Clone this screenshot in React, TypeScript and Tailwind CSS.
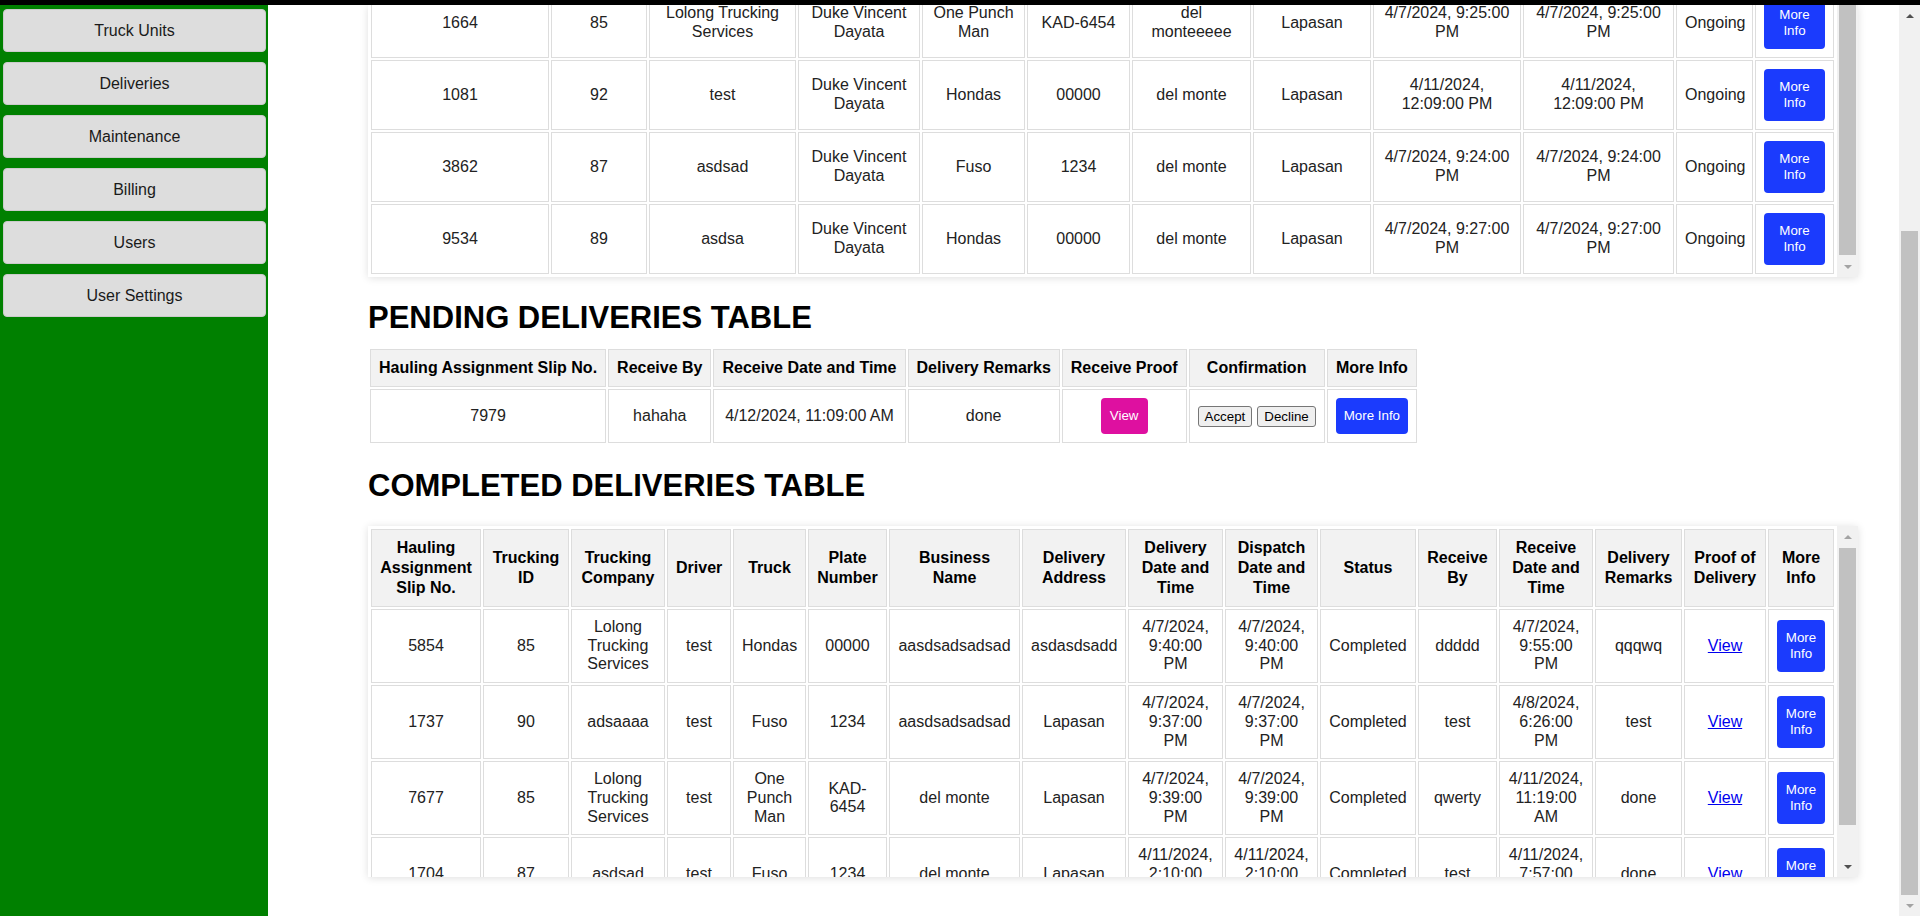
import React from 'react';

const menu = ['Truck Units', 'Deliveries', 'Maintenance', 'Billing', 'Users', 'User Settings'];

const ongoing = [
  ['1664', '85', 'Lolong Trucking Services', 'Duke Vincent Dayata', 'One Punch Man', 'KAD-6454', 'del monteeeee', 'Lapasan', '4/7/2024, 9:25:00 PM', '4/7/2024, 9:25:00 PM', 'Ongoing'],
  ['1081', '92', 'test', 'Duke Vincent Dayata', 'Hondas', '00000', 'del monte', 'Lapasan', '4/11/2024, 12:09:00 PM', '4/11/2024, 12:09:00 PM', 'Ongoing'],
  ['3862', '87', 'asdsad', 'Duke Vincent Dayata', 'Fuso', '1234', 'del monte', 'Lapasan', '4/7/2024, 9:24:00 PM', '4/7/2024, 9:24:00 PM', 'Ongoing'],
  ['9534', '89', 'asdsa', 'Duke Vincent Dayata', 'Hondas', '00000', 'del monte', 'Lapasan', '4/7/2024, 9:27:00 PM', '4/7/2024, 9:27:00 PM', 'Ongoing'],
];

const completedHead = [
  'Hauling Assignment Slip No.', 'Trucking ID', 'Trucking Company', 'Driver', 'Truck', 'Plate Number',
  'Business Name', 'Delivery Address', 'Delivery Date and Time', 'Dispatch Date and Time', 'Status',
  'Receive By', 'Receive Date and Time', 'Delivery Remarks', 'Proof of Delivery', 'More Info',
];

const completed = [
  ['5854', '85', 'Lolong Trucking Services', 'test', 'Hondas', '00000', 'aasdsadsadsad', 'asdasdsadd', '4/7/2024, 9:40:00 PM', '4/7/2024, 9:40:00 PM', 'Completed', 'ddddd', '4/7/2024, 9:55:00 PM', 'qqqwq'],
  ['1737', '90', 'adsaaaa', 'test', 'Fuso', '1234', 'aasdsadsadsad', 'Lapasan', '4/7/2024, 9:37:00 PM', '4/7/2024, 9:37:00 PM', 'Completed', 'test', '4/8/2024, 6:26:00 PM', 'test'],
  ['7677', '85', 'Lolong Trucking Services', 'test', 'One Punch Man', 'KAD-6454', 'del monte', 'Lapasan', '4/7/2024, 9:39:00 PM', '4/7/2024, 9:39:00 PM', 'Completed', 'qwerty', '4/11/2024, 11:19:00 AM', 'done'],
  ['1704', '87', 'asdsad', 'test', 'Fuso', '1234', 'del monte', 'Lapasan', '4/11/2024, 2:10:00 PM', '4/11/2024, 2:10:00 PM', 'Completed', 'test', '4/11/2024, 7:57:00 PM', 'done'],
];

const td = 'border border-[#dddddd] p-2 text-center align-middle text-[#222]';
const th = 'border border-[#dddddd] bg-[#f2f2f2] p-2 text-center align-middle font-bold leading-[20px] text-black';

const MoreInfo = ({ wide }: { wide?: boolean }) => (
  <button className={`mx-auto block w-fit rounded-[4px] bg-[#1b3bfd] px-2 py-[10px] text-[13.33px] leading-[16px] text-white ${wide ? 'whitespace-nowrap' : ''}`}>
    More Info
  </button>
);

const Arrow = ({ up, dark }: { up?: boolean; dark?: boolean }) => (
  <div className="flex h-[21px] shrink-0 items-center justify-center">
    {up ? (
      <div className={`h-0 w-0 border-x-[4px] border-b-[4px] border-x-transparent ${dark ? 'border-b-[#505050]' : 'border-b-[#a3a3a3]'}`} />
    ) : (
      <div className={`h-0 w-0 border-x-[4px] border-t-[4px] border-x-transparent ${dark ? 'border-t-[#505050]' : 'border-t-[#a3a3a3]'}`} />
    )}
  </div>
);

export default function App() {
  return (
    <div className="flex h-screen w-full flex-col overflow-hidden bg-white font-['Liberation_Sans',Arial,sans-serif] text-[16px]">
      <div className="h-[5px] shrink-0 bg-black" />
      <div className="flex min-h-0 flex-1">
        {/* sidebar */}
        <aside className="flex w-[268px] shrink-0 flex-col gap-[10px] bg-[#008000] pl-[3px] pr-[2px] pt-[4px]">
          {menu.map(m => (
            <button key={m} className="flex h-[43px] items-center justify-center rounded-[4px] border border-[#cbcbcb] bg-[#dddddd] text-[16px] leading-[18px] text-[#1a1a1a]">
              {m}
            </button>
          ))}
        </aside>

        <main className="min-w-0 flex-1 overflow-hidden pl-[100px]">
          {/* ongoing deliveries, scrolled to bottom */}
          <div className="flex h-[272px] w-[1490px] shadow-[0_1px_8px_rgba(0,0,0,0.13)]">
            <div className="flex flex-col justify-end overflow-hidden p-px">
              <table className="w-[1467px] table-fixed border-separate border-spacing-[2px] leading-[18.7px]">
                <colgroup>
                  <col className="w-[178px]" />
                  <col className="w-[96px]" />
                  <col className="w-[147px]" />
                  <col className="w-[122px]" />
                  <col className="w-[103px]" />
                  <col className="w-[103px]" />
                  <col className="w-[119px]" />
                  <col className="w-[118px]" />
                  <col className="w-[148px]" />
                  <col className="w-[151px]" />
                  <col className="w-[77px]" />
                  <col className="w-[79px]" />
                </colgroup>
                <tbody>
                  {ongoing.map(r => (
                    <tr key={r[0]}>
                      {r.map((c, i) => (
                        <td key={i} className={td}>{c}</td>
                      ))}
                      <td className={td}><MoreInfo /></td>
                    </tr>
                  ))}
                </tbody>
              </table>
            </div>
            <div className="flex flex-1 flex-col bg-[#f1f1f1] px-[2px]">
              <div className="mb-px flex-1 bg-[#c1c1c1]" />
              <Arrow />
            </div>
          </div>

          <h1 className="mt-[23px] text-[31px] font-bold leading-[36px] text-black">PENDING DELIVERIES TABLE</h1>
          <table className="mt-[11px] border-separate border-spacing-[2px] leading-[18.7px]">
            <thead>
              <tr>
                {['Hauling Assignment Slip No.', 'Receive By', 'Receive Date and Time', 'Delivery Remarks', 'Receive Proof', 'Confirmation', 'More Info'].map(h => (
                  <th key={h} className={th}>{h}</th>
                ))}
              </tr>
            </thead>
            <tbody>
              <tr>
                <td className={td}>7979</td>
                <td className={td}>hahaha</td>
                <td className={td}>4/12/2024, 11:09:00 AM</td>
                <td className={td}>done</td>
                <td className={td}>
                  <button className="mx-auto block rounded-[4px] bg-[#de10a0] px-[9px] py-[10px] text-[13.33px] leading-[16px] text-white">View</button>
                </td>
                <td className={td}>
                  <div className="flex justify-center gap-[5px]">
                    <button className="rounded-[3px] border border-[#767676] bg-[#efefef] px-[6px] py-[2px] text-[13.33px] leading-[15px] text-black">Accept</button>
                    <button className="rounded-[3px] border border-[#767676] bg-[#efefef] px-[6px] py-[2px] text-[13.33px] leading-[15px] text-black">Decline</button>
                  </div>
                </td>
                <td className={td}><MoreInfo wide /></td>
              </tr>
            </tbody>
          </table>

          <h1 className="mt-[23px] text-[31px] font-bold leading-[36px] text-black">COMPLETED DELIVERIES TABLE</h1>
          <div className="mt-[22px] flex h-[351px] w-[1490px] shadow-[0_1px_8px_rgba(0,0,0,0.13)]">
            <div className="overflow-hidden p-px">
              <table className="w-[1467px] table-fixed border-separate border-spacing-[2px] leading-[18.7px]">
                <colgroup>
                  <col className="w-[110px]" />
                  <col className="w-[86px]" />
                  <col className="w-[94px]" />
                  <col className="w-[64px]" />
                  <col className="w-[73px]" />
                  <col className="w-[79px]" />
                  <col className="w-[131px]" />
                  <col className="w-[104px]" />
                  <col className="w-[95px]" />
                  <col className="w-[93px]" />
                  <col className="w-[96px]" />
                  <col className="w-[79px]" />
                  <col className="w-[94px]" />
                  <col className="w-[87px]" />
                  <col className="w-[82px]" />
                  <col className="w-[66px]" />
                </colgroup>
                <thead>
                  <tr>
                    {completedHead.map(h => (
                      <th key={h} className={th}>{h}</th>
                    ))}
                  </tr>
                </thead>
                <tbody>
                  {completed.map(r => (
                    <tr key={r[0]}>
                      {r.map((c, i) => (
                        <td key={i} className={td}>{c}</td>
                      ))}
                      <td className={td}><a href="#" className="text-[#0000ee] underline">View</a></td>
                      <td className={td}><MoreInfo /></td>
                    </tr>
                  ))}
                </tbody>
              </table>
            </div>
            <div className="flex flex-1 flex-col bg-[#f1f1f1] px-[2px]">
              <Arrow up />
              <div className="mt-px h-[277px] bg-[#c1c1c1]" />
              <div className="flex-1" />
              <Arrow dark />
            </div>
          </div>
        </main>

        {/* page scrollbar */}
        <div className="flex w-[21px] shrink-0 flex-col bg-[#f1f1f1] px-[2px]">
          <Arrow up dark />
          <div className="h-[205px]" />
          <div className="h-[664px] bg-[#c1c1c1]" />
          <div className="flex-1" />
          <Arrow />
        </div>
      </div>
    </div>
  );
}
